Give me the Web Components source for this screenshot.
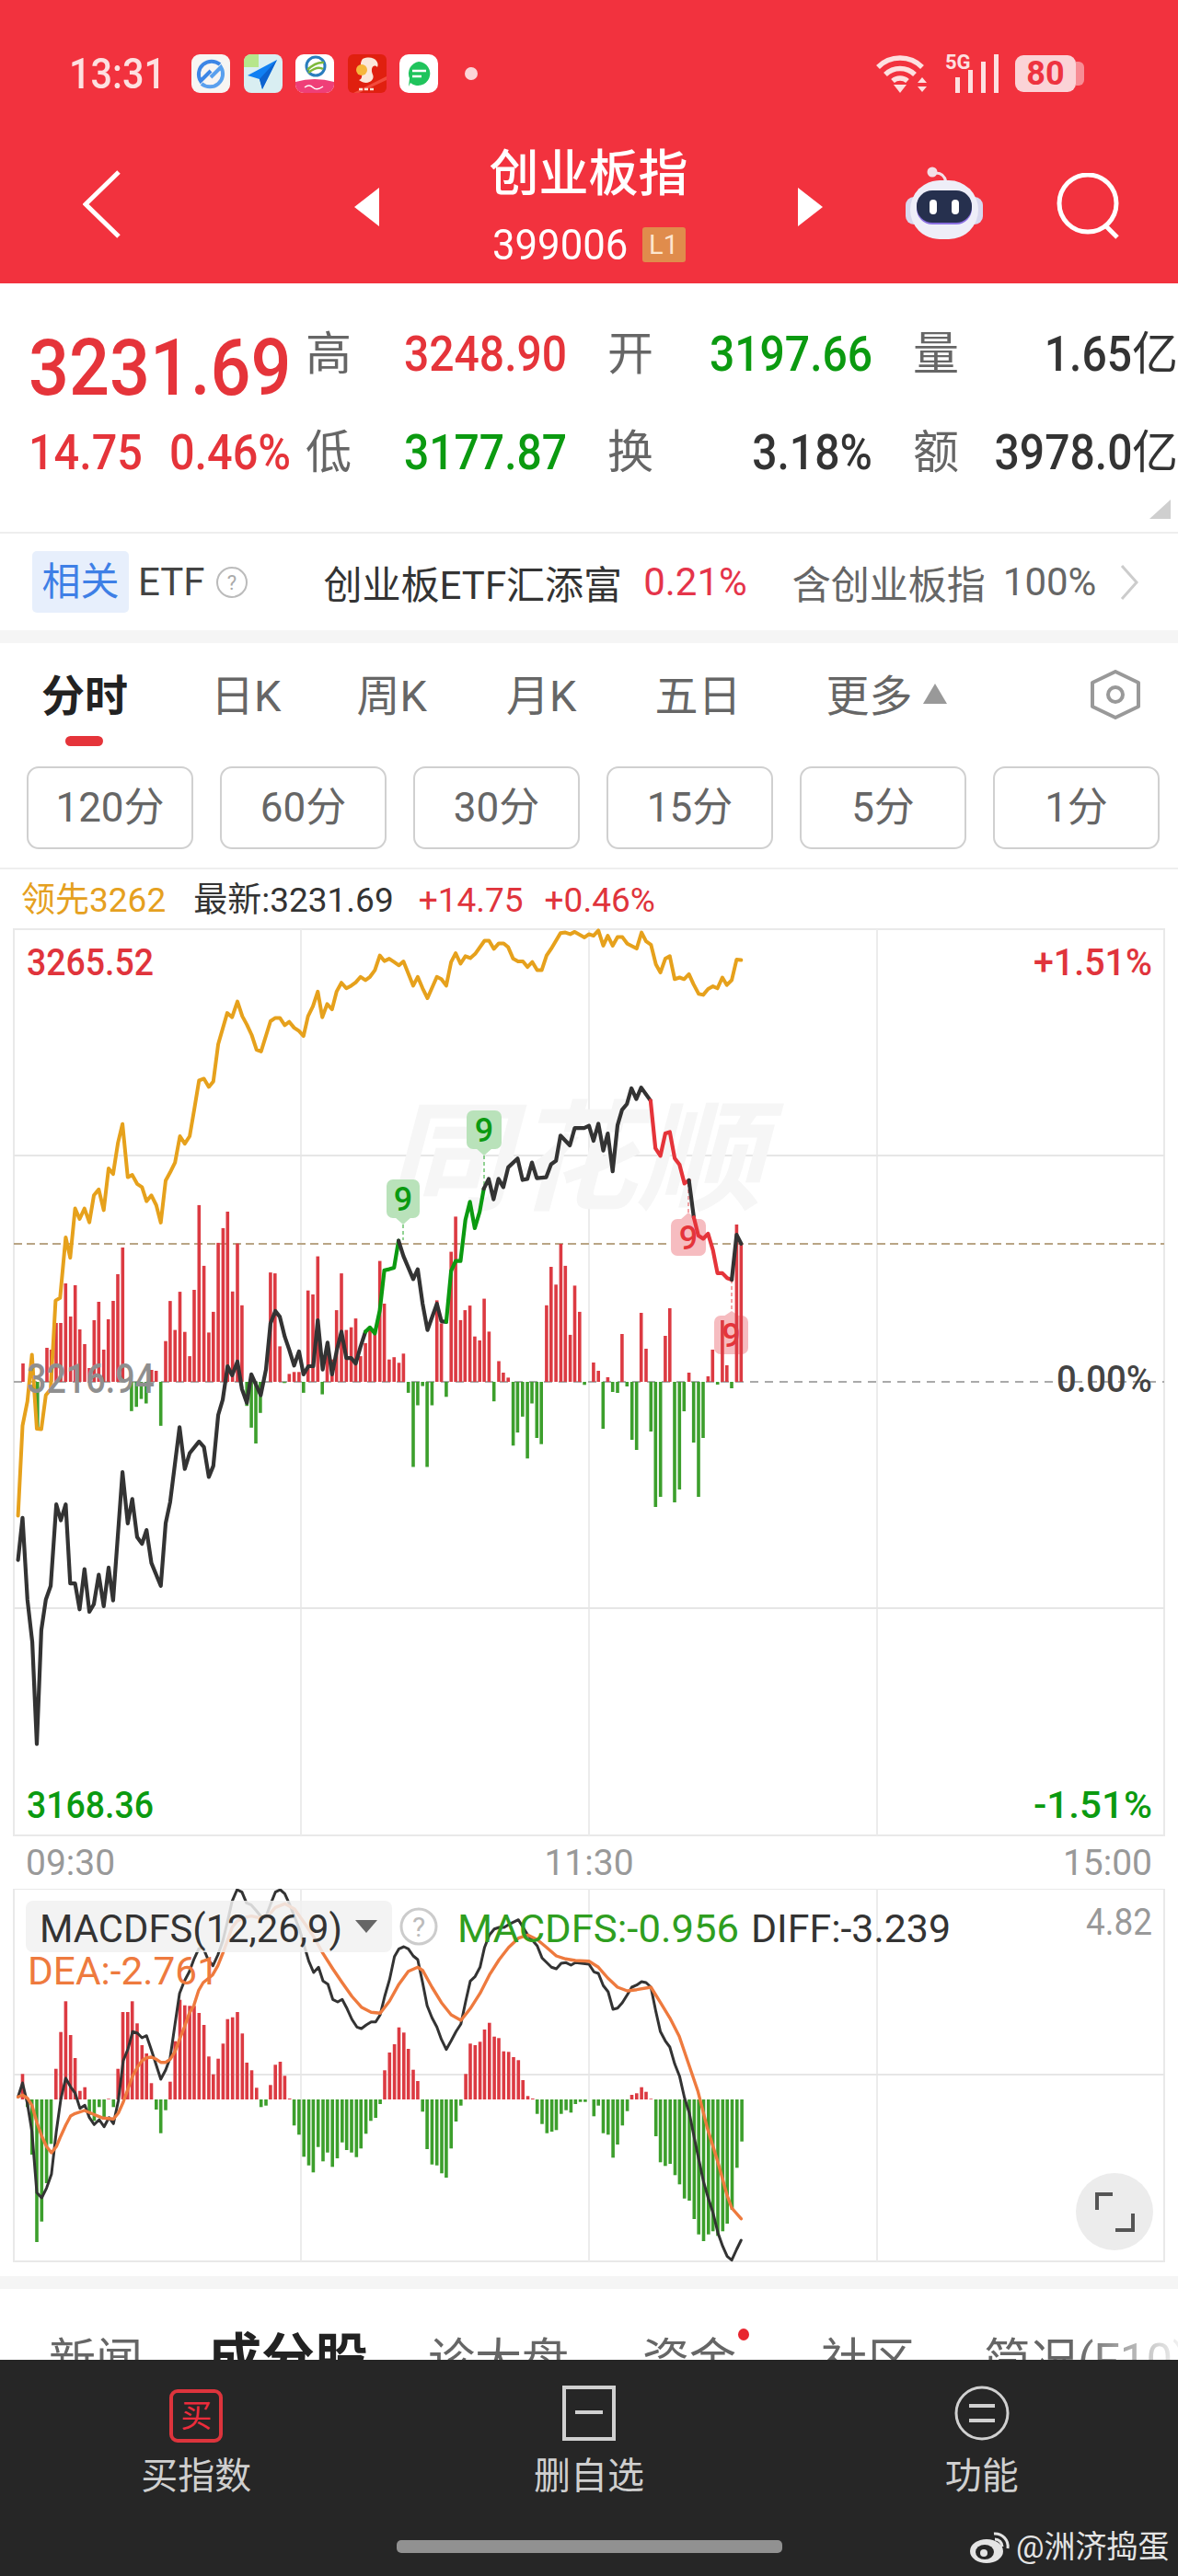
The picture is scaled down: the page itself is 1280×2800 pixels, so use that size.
<!DOCTYPE html>
<html lang="zh-CN">
<head>
<meta charset="utf-8">
<title>创业板指</title>
<style>
  html, body { margin: 0; padding: 0; background: #fff; }
  body {
    width: 1280px;
    height: 2800px;
    overflow: hidden;
    font-family: Roboto, "Noto Sans CJK SC", sans-serif;
    color: #333;
  }
</style>
</head>
<body>
<x-top-bar></x-top-bar>
<x-quote></x-quote>
<x-etf-row></x-etf-row>
<x-period-tabs></x-period-tabs>
<x-legend></x-legend>
<x-price-chart></x-price-chart>
<x-time-axis></x-time-axis>
<x-macd-chart></x-macd-chart>
<x-sub-tabs></x-sub-tabs>
<x-foot-bar></x-foot-bar>

<script>
const RED = "#e5343a";
const GREEN = "#0b9a10";
const BAR_RED = "#dc3a42";
const BAR_GREEN = "#3c9f2c";

// the chart numbers below were read from crops, so each list keeps its crop's scale
function crop(flat, x0, y0, sy) {
  const out = [];
  for (let i = 0; i < flat.length; i += 2) {
    out.push([x0 + flat[i] / 2.45, y0 + flat[i + 1] / sy]);
  }
  return out;
}
const a3 = (flat) => crop(flat, 0, 960, 2.8);
const a4 = (flat) => crop(flat, 640, 1000, 2.8);
const a5 = (flat) => crop(flat, 0, 1480, 3.015);
const m7 = (flat) => crop(flat, 0, 2040, 3);
const m6 = (flat) => crop(flat, 640, 1980, 3);

function line(points, color, width) {
  const p = points.map((q) => q[0].toFixed(1) + "," + q[1].toFixed(1)).join(" ");
  return `<polyline points="${p}" fill="none" stroke="${color}" stroke-width="${width}" stroke-linejoin="round" stroke-linecap="round"/>`;
}

function label(x, y, str, fill, size, len, anchor) {
  return `<text x="${x}" y="${y}" fill="${fill}" font-size="${size}" text-anchor="${anchor || "start"}" textLength="${len}" lengthAdjust="spacingAndGlyphs">${str}</text>`;
}

function bar(x, zero, h) {
  const color = h > 0 ? BAR_RED : BAR_GREEN;
  const top = h > 0 ? zero - h : zero;
  return `<rect x="${(x - 1.8).toFixed(1)}" y="${top.toFixed(1)}" width="3.6" height="${Math.abs(h).toFixed(1)}" fill="${color}"/>`;
}

function frame(top, bottom, rows) {
  let s = `<rect x="15" y="${top}" width="1250" height="${bottom - top}" fill="none" stroke="#e9e9e9" stroke-width="2"/>`;
  for (const x of [327, 640, 953]) {
    s += `<line x1="${x}" x2="${x}" y1="${top}" y2="${bottom}" stroke="#ececec" stroke-width="2"/>`;
  }
  for (const y of rows) {
    s += `<line x1="15" x2="1265" y1="${y}" y2="${y}" stroke="#e6e6e6" stroke-width="2"/>`;
  }
  return s;
}

class TopBar extends HTMLElement {
  constructor() {
    super();
    this.attachShadow({ mode: "open" });
    this.shadowRoot.innerHTML = `
      <style>
        :host { display: block; height: 308px; background: #f2323e; color: #fff; overflow: hidden; }
        .status { display: flex; align-items: center; height: 42px; padding: 59px 0 0 75px; color: #fde0e0; }
        .time { width: 133px; font-size: 46px; font-weight: 500; }
        .time span { display: inline-block; transform: scaleX(.9); transform-origin: left center; }
        .apps { display: flex; gap: 14.5px; }
        .apps svg { display: block; }
        .dot { width: 14px; height: 14px; border-radius: 50%; background: #fcd4d8; margin-left: 29px; }
        .right { display: flex; align-items: center; margin-left: auto; padding-right: 102px; }
        .five { position: relative; width: 75px; height: 42px; margin-left: 15px; }
        .five b { position: absolute; left: 0; top: -4px; font-size: 22px; font-weight: 700; }
        .batt { display: flex; align-items: center; margin-left: 1px; }
        .batt div { width: 66px; height: 40px; border-radius: 9px; background: #fbd3d7; color: #ee3340; font-size: 36px; font-weight: 700; line-height: 40px; text-align: center; }
        .batt i { width: 9px; height: 26px; background: #f78d95; border-radius: 0 6px 6px 0; }
        .nav { display: flex; align-items: flex-start; padding-top: 61px; }
        .nav > svg { flex: none; }
        .back { margin: 23px 0 0 90px; }
        .tri-l { margin: 42px 0 0 254px; }
        .tri-r { margin-top: 42px; }
        .center { flex: none; width: 455px; display: flex; flex-direction: column; align-items: center; }
        .title { font-size: 54px; line-height: 56px; font-weight: 500; }
        .code { display: flex; width: 210px; margin-top: 29px; align-items: center; }
        .code span { flex: none; width: 163px; font-size: 46px; line-height: 38px; transform: scaleX(.95); transform-origin: left center; }
        .code b { flex: none; width: 47px; height: 38px; background: #e08c4c; border-radius: 3px; color: #fde6cf; font-size: 29px; font-weight: 400; line-height: 38px; text-align: center; }
        .robot { margin: 19px 0 0 90px; }
        .search { margin: 26px 0 0 80px; }
      </style>
      <div class="status">
        <div class="time"><span>13:31</span></div>
        <div class="apps">
          <svg width="42" height="42" viewBox="0 0 42 42">
            <rect width="42" height="42" rx="9" fill="#f7f5f3"/>
            <path d="M31 11A14 14 0 0 0 10 29L21 18" fill="none" stroke="#3d86e6" stroke-width="4"/>
            <path d="M11 32A14 14 0 0 0 32 14L21 25" fill="none" stroke="#5aa0ee" stroke-width="4"/>
          </svg>
          <svg width="42" height="42" viewBox="0 0 42 42">
            <rect width="42" height="42" rx="8" fill="#d9eef2"/>
            <path d="M8 0H16V14H0V8A8 8 0 0 1 8 0Z" fill="#b6e68c"/>
            <path d="M36 6L4 23L17 27L20 38Z" fill="#1180f2"/>
            <path d="M36 6L17 27L20 38Z" fill="#0c62cf"/>
          </svg>
          <svg width="42" height="42" viewBox="0 0 42 42">
            <rect width="42" height="42" rx="9" fill="#fff"/>
            <path d="M0 30Q21 24 42 30V33A9 9 0 0 1 33 42H9A9 9 0 0 1 0 33Z" fill="#ef3f78"/>
            <ellipse cx="22" cy="13" rx="10" ry="10" fill="none" stroke="#2a7dbe" stroke-width="3"/>
            <path d="M13 17Q22 8 31 9M14 20Q24 12 30 16" fill="none" stroke="#7fb93c" stroke-width="2.5"/>
            <path d="M10 36Q15 32 19 36T30 35" fill="none" stroke="#fff" stroke-width="1.5"/>
          </svg>
          <svg width="42" height="42" viewBox="0 0 42 42">
            <rect width="42" height="42" rx="6" fill="#e0200f"/>
            <path d="M42 24V28L12 42H6Z" fill="#f24a3c"/>
            <path d="M16 5C27 0 35 8 32 14C28 10 24 15 27 22C30 28 21 35 12 28C20 26 10 12 16 5Z" fill="#fbe7da"/>
            <circle cx="15" cy="17" r="6" fill="#f6b73c"/>
            <path d="M12 38H30" stroke="#fbe7da" stroke-width="2.5" stroke-dasharray="4 2"/>
          </svg>
          <svg width="42" height="42" viewBox="0 0 42 42">
            <rect width="42" height="42" rx="10" fill="#fff"/>
            <path d="M21 8A13 13 0 1 1 12 31L10 35L11 26A13 13 0 0 1 21 8Z" fill="#1fc45c"/>
            <path d="M14 18H29M14 24H24" stroke="#fff" stroke-width="2.5"/>
          </svg>
        </div>
        <div class="dot"></div>
        <div class="right">
          <svg width="60" height="42" viewBox="0 0 60 42" fill="none" stroke="#fde0e0">
            <path d="M2 14A34 34 0 0 1 50 14" stroke-width="5.500"/>
            <path d="M10 22A23 23 0 0 1 42 22" stroke-width="5.500"/>
            <path d="M18 29A12 12 0 0 1 34 29" stroke-width="5.500"/>
            <path d="M19 33H33L26 42Z" fill="#fde0e0" stroke="none"/>
            <path d="M50 25L55 31H45ZM45 35H55L50 41Z" fill="#fde0e0" stroke="none"/>
          </svg>
          <div class="five">
            <b>5G</b>
            <svg width="75" height="42" viewBox="0 0 75 42" fill="#fde0e0">
              <rect x="11" y="25" width="5" height="17"/>
              <rect x="25" y="17" width="5" height="25"/>
              <rect x="39" y="8" width="5" height="34"/>
              <rect x="53" y="0" width="5" height="42"/>
            </svg>
          </div>
          <div class="batt"><div>80</div><i></i></div>
        </div>
      </div>
      <div class="nav">
        <svg class="back" width="41" height="74" viewBox="0 0 41 74" fill="none" stroke="#fff" stroke-width="5"><path d="M39 2L3 37L39 72"/></svg>
        <svg class="tri-l" width="27" height="42" viewBox="0 0 27 42" fill="#fff"><path d="M27 0V42L0 21Z"/></svg>
        <div class="center">
          <div class="title">创业板指</div>
          <div class="code"><span>399006</span><b>L1</b></div>
        </div>
        <svg class="tri-r" width="27" height="42" viewBox="0 0 27 42" fill="#fff"><path d="M0 0V42L27 21Z"/></svg>
        <svg class="robot" width="84" height="82" viewBox="0 0 84 82">
          <circle cx="29" cy="6" r="5.500" fill="#f3dfe6"/>
          <path d="M31 7Q42 6 44 17" fill="none" stroke="#f3dfe6" stroke-width="3"/>
          <rect x="0" y="33" width="84" height="30" rx="9" fill="#d8d8ee"/>
          <rect x="5" y="15" width="74" height="64" rx="32" fill="#eeeef8"/>
          <rect x="12" y="27" width="60" height="36" rx="17" fill="#8a6fe0"/>
          <rect x="12" y="26" width="60" height="35" rx="17" fill="#26304e"/>
          <rect x="26" y="36" width="8" height="16" rx="4" fill="#fff"/>
          <rect x="50" y="36" width="8" height="16" rx="4" fill="#fff"/>
        </svg>
        <svg class="search" width="72" height="72" viewBox="0 0 72 72" fill="none" stroke="#fff" stroke-width="5"><ellipse cx="34" cy="33" rx="31" ry="31"/><path d="M53 57L66 70"/></svg>
      </div>
    `;
  }
}

class Quote extends HTMLElement {
  constructor() {
    super();
    this.attachShadow({ mode: "open" });
    this.shadowRoot.innerHTML = `
      <style>
        :host { display: block; height: 272px; position: relative; box-sizing: border-box; padding: 32px 0 0 31px; border-bottom: 2px solid #eee; }
        .grid { display: grid; grid-template-columns: 304px 47px 234px 94px 238px 94px 238px; grid-auto-rows: 90px; row-gap: 17px; align-items: center; }
        .l { justify-self: end; font-size: 50px; line-height: 90px; color: #666; }
        .v { justify-self: end; display: flex; align-items: center; font-size: 54px; font-weight: 500; line-height: 90px; }
        .v span { display: inline-block; transform: scaleX(.89); transform-origin: right center; }
        .v em { font-style: normal; font-size: 50px; font-weight: 400; }
        .up { color: ${RED}; }
        .down { color: ${GREEN}; }
        .big { font-size: 86px; line-height: 90px; font-weight: 500; color: ${RED}; padding-top: 30px; }
        .big span, .pair span { display: inline-block; transform: scaleX(.9); transform-origin: left center; }
        .pair { display: flex; gap: 15px; font-size: 54px; font-weight: 500; line-height: 90px; color: ${RED}; }
        .pair span { flex: none; }
        .corner { position: absolute; right: 8px; bottom: 14px; }
      </style>
      <div class="grid">
        <div class="big"><span>3231.69</span></div>
        <div class="l">高</div><div class="v up"><span>3248.90</span></div>
        <div class="l">开</div><div class="v down"><span>3197.66</span></div>
        <div class="l">量</div><div class="v"><span>1.65</span><em>亿</em></div>
        <div class="pair"><span>14.75</span><span>0.46%</span></div>
        <div class="l">低</div><div class="v down"><span>3177.87</span></div>
        <div class="l">换</div><div class="v"><span>3.18%</span></div>
        <div class="l">额</div><div class="v"><span>3978.0</span><em>亿</em></div>
      </div>
      <svg class="corner" width="23" height="21" viewBox="0 0 23 21" fill="#cfcfcf"><path d="M23 0V21H0Z"/></svg>
    `;
  }
}

class EtfRow extends HTMLElement {
  constructor() {
    super();
    this.attachShadow({ mode: "open" });
    this.shadowRoot.innerHTML = `
      <style>
        :host { display: flex; align-items: center; height: 119px; box-sizing: border-box; padding-left: 35px; border-bottom: 14px solid #f5f5f5; font-size: 42px; white-space: nowrap; }
        .chip { width: 105px; height: 67px; line-height: 67px; text-align: center; border-radius: 5px; background: #e7effc; color: #3e7fe6; }
        .etf { margin-left: 10px; color: #444; }
        .help { margin-left: 11px; }
        .name { margin-left: 82px; color: #333; }
        .pct { margin-left: 23px; color: #e5344a; }
        .sub { margin-left: 49px; color: #666; }
        .cent { margin-left: 19px; color: #666; }
        svg { flex: none; }
        .more { margin-left: 26px; }
      </style>
      <div class="chip">相关</div>
      <span class="etf">ETF</span>
      <svg class="help" width="36" height="36" viewBox="0 0 36 36"><circle cx="18" cy="18" r="16" fill="none" stroke="#bbb" stroke-width="2"/><text x="18" y="26" text-anchor="middle" font-size="22" fill="#aaa">?</text></svg>
      <span class="name">创业板ETF汇添富</span>
      <span class="pct">0.21%</span>
      <span class="sub">含创业板指</span>
      <span class="cent">100%</span>
      <svg class="more" width="20" height="38" viewBox="0 0 20 38" fill="none" stroke="#ccc" stroke-width="3"><path d="M2 1L18 19L2 37"/></svg>
    `;
  }
}

class PeriodButton extends HTMLElement {
  constructor() {
    super();
    this.attachShadow({ mode: "open" });
    this.shadowRoot.innerHTML = `
      <style>
        :host { display: block; box-sizing: border-box; width: 181px; height: 90px; line-height: 86px; text-align: center; border: 2px solid #d0d0d0; border-radius: 13px; color: #666; font-size: 44px; }
      </style>
      <slot></slot>
    `;
  }
}

class PeriodTabs extends HTMLElement {
  constructor() {
    super();
    this.attachShadow({ mode: "open" });
    this.shadowRoot.innerHTML = `
      <style>
        :host { display: block; box-sizing: border-box; height: 246px; padding: 28px 0 0 45px; border-bottom: 2px solid #eee; }
        .tabs { display: flex; align-items: flex-start; height: 84px; font-size: 47px; line-height: 60px; color: #666; }
        .active { width: 92px; font-weight: 700; color: #222; white-space: nowrap; }
        .active i { display: block; width: 41px; height: 11px; margin: 13px auto 0 26px; border-radius: 6px; background: ${RED}; }
        .tri { margin: 16px 0 0 11px; }
        .set { margin: 1px 40px 0 auto; }
        .btns { display: flex; gap: 29px; margin: 22px 0 0 -16px; }
      </style>
      <div class="tabs">
        <div class="active">分时<i></i></div>
        <div style="margin-left:92px">日K</div>
        <div style="margin-left:82px">周K</div>
        <div style="margin-left:86px">月K</div>
        <div style="margin-left:85px">五日</div>
        <div style="margin-left:92px">更多</div>
        <svg class="tri" width="26" height="22" viewBox="0 0 26 22" fill="#999"><path d="M13 0L26 22H0Z"/></svg>
        <svg class="set" width="56" height="54" viewBox="0 0 56 54" fill="none" stroke="#999" stroke-width="4" stroke-linejoin="round"><path d="M28 2L53 14V40L28 52L3 40V14Z"/><circle cx="28" cy="27" r="8"/></svg>
      </div>
      <div class="btns">
        <x-period-btn>120分</x-period-btn>
        <x-period-btn>60分</x-period-btn>
        <x-period-btn>30分</x-period-btn>
        <x-period-btn>15分</x-period-btn>
        <x-period-btn>5分</x-period-btn>
        <x-period-btn>1分</x-period-btn>
      </div>
    `;
  }
}

class Legend extends HTMLElement {
  constructor() {
    super();
    this.attachShadow({ mode: "open" });
    this.shadowRoot.innerHTML = `
      <style>
        :host { display: flex; box-sizing: border-box; height: 55px; padding: 12px 0 0 23px; font-size: 37px; line-height: 44px; white-space: nowrap; }
        .gold { color: #e5a020; }
        .now { margin-left: 30px; color: #333; }
        .a { margin-left: 27px; color: #e0343c; }
        .b { margin-left: 23px; color: #e0343c; }
      </style>
      <span class="gold">领先3262</span>
      <span class="now">最新:3231.69</span>
      <span class="a">+14.75</span>
      <span class="b">+0.46%</span>
    `;
  }
}

const GOLD = [
  ...a5([48,505,60,210,73,130]),
  ...a3([85,1435]),
  ...a5([98,220,110,222,122,110,135,90]),
  ...a3([148,1270,160,1262,175,1078,187,1140,200,990,212,1022,225,990,238,1032,250,950,263,932,276,995,289,868,301,885,314,790,326,733,340,895,352,888,365,915,378,925,390,968,403,950,416,980,428,1033,441,905,453,880,466,850,479,770,492,793,505,770,517,690,530,600,543,595,556,620,568,603,581,490,605,395,618,408,632,360,645,405,657,430,670,462,683,507,695,512,720,420,733,410,745,410,758,432,770,422,783,440,796,450,808,465,820,405,833,375,846,330,858,408,871,368,884,384,896,330,909,303,922,320,935,312,947,302,960,285,973,295,985,285,998,265,1011,220,1023,237,1036,230,1049,240,1062,250,1074,238,1087,275,1100,312,1112,285,1125,320,1138,350,1163,285,1175,292,1188,312,1201,240,1213,213,1226,245,1239,222,1252,228,1265,215,1290,175,1302,175,1315,200,1328,183,1341,183,1353,195,1366,230,1379,238,1392,238,1404,255,1417,240,1430,265,1442,265,1455,220,1467,200,1492,152,1505,150,1518,155,1530,148,1556,165,1568,155]),
  ...a4([12,48,25,32,38,78,50,48,63,78,76,52,89,52,102,72,127,87,140,38,152,65,165,75,178,135,190,160,203,118,215,110,228,180,241,175,253,180,266,165,278,195,292,225,304,228,317,210,330,202,342,208,355,175,367,198,380,183,393,120,405,122]),
];

const PRICE_LINES = [
  ["#333", [
    ...a5([48,650,60,512,73,780,86,920,98,1253,110,880,122,780,135,735,150,468,162,520,175,468,187,727,200,727,212,812,225,680,238,820,250,795,263,698,276,802,289,675,301,783,326,362,340,530,352,450,365,575,378,597,390,552,403,660,428,735,441,530,453,460,478,215,492,352,505,300,530,262,543,280,556,378,568,342,581,175,593,125,606,15,618,45,632,0,644,90,657,135,669,42,694,110]),
    ...a3([708,1480,720,1340,733,1302,745,1320,758,1380,770,1420,783,1468,796,1425,808,1495,821,1470,834,1470,846,1330,859,1480,872,1398,884,1495,897,1420,909,1365,922,1445,935,1445,947,1462,960,1410,973,1365]),
  ]],
  [GREEN, a3([973,1365,985,1352,998,1370,1011,1300,1023,1178,1036,1175,1049,1170,1061,1088])],
  ["#333", a3([1061,1088,1074,1135,1087,1170,1100,1205,1112,1175,1125,1280,1138,1360,1163,1280,1175,1333,1188,1335])],
  [GREEN, a3([1188,1335,1201,1180,1213,1150,1226,1150,1239,1025,1251,970,1264,1050,1277,1000,1288,930])],
  ["#333", [
    ...a3([1288,930,1301,900,1314,962,1327,900,1340,925,1353,865,1378,838,1391,903,1404,900,1416,850,1429,898,1454,895,1467,855,1480,845,1492,768,1517,798,1530,745,1555,745,1568,738]),
    ...a4([12,672,25,620,38,702,50,650,63,765,76,625,88,578,101,560,113,512,126,545,139,510,164,550]),
  ]],
  [RED, a4([164,550,177,695,190,718,203,650,215,645,228,725,241,745,254,802,266,792])],
  ["#333", a4([266,792,279,905])],
  [RED, a4([279,905,291,960,304,970,317,955,330,1005,342,1075,355,1075,368,1090,380,1095])],
  ["#333", a4([380,1095,393,958,405,985])],
];

// red volume, left part: x from crop 10, height in px
const RED_A = [30,20, 108,37, 122,35, 138,64, 153,64, 169,107, 185,71, 200,105, 215,57, 231,41, 246,15, 262,67, 277,87, 293,35, 308,68, 324,88, 339,117, 355,146, 449,13, 464,12];
// red volume: x and bar top as read on crop 3
const RED_B = [441,1394,453,1272,466,1360,479,1244,492,1366,505,1440,517,1238,530,980,543,1165,556,1368,568,1305,581,1095,594,1050,606,1000,619,1243,632,1097,644,1285,720,1185,732,1188,745,1410,770,1494,783,1488,796,1488,820,1240,833,1252,846,1136,871,1430,884,1450,896,1300,909,1188,922,1360,935,1352,947,1325,960,1440,973,1400,985,1360,998,1360,1011,1150,1023,1280,1036,1450,1049,1443,1062,1460,1074,1432,1163,1270,1175,1340,1201,1122,1213,1015,1226,1330,1238,1300,1251,1286,1264,1380,1277,1392,1289,1265,1302,1365,1328,1455,1340,1490,1353,1505,1455,1285,1467,1168,1480,1222,1493,1098,1505,1165,1518,1375,1530,1225,1543,1305];
// green volume: x and bar bottom as read on crop 5
const GREEN_A = [100,220,350,162,363,148,376,122,389,137,428,210,657,145,669,216,681,268,693,168,757,70,808,102,858,107,1087,102,1100,345,1112,143,1125,80,1137,345,1150,143,1188,115,1315,130,1366,275,1378,232,1391,180,1404,317,1416,137,1429,250,1441,270,1556,76];
// right part, crop 4 and crop 9: [x on crop, height]
const RED_C = [12,21,25,12,50,5,88,52,139,75,152,36,203,50,215,80,266,10,317,6,329,35,355,67,367,18,393,171,405,150];
const GREEN_C = [46,51,77,11,93,12,124,5,140,63,155,74,202,54,217,136,233,125,279,131,295,117,310,32,341,66,357,125,372,61,419,3,465,7];

// MACD histogram, crop 7: x, end of bar; crop 6 after that
const MACD_A = [60,642,73,750,85,905,98,1190,111,1123,124,998,136,870,149,625,162,505,175,405,188,515,200,590,213,697,226,685,238,775,251,795,264,750,277,790,289,723,302,750,314,625,327,440,340,440,352,405,365,477,378,548,390,575,403,672,416,758,428,835,441,760,453,667,466,535,479,400,492,418,505,420,517,420,530,443,543,482,556,585,568,643,581,592,594,543,606,463,619,457,632,440,645,510,657,605,670,630,683,687,695,750,708,745,720,678,733,612,746,602,758,648,771,722,783,810,796,840,809,912,822,940,834,963,847,880,860,927,872,898,885,945,898,917,911,865,923,890,936,898,949,913,961,885,974,837,987,795,1000,785,1012,740,1024,630,1037,572,1050,545,1062,490,1075,507,1087,560,1100,628,1112,665,1125,765,1137,887,1150,937,1163,940,1176,966,1188,980,1201,885,1214,797,1227,745,1240,642,1252,543,1265,548,1278,537,1290,497,1303,475,1316,520,1328,525,1341,568,1354,570,1367,587,1380,597,1392,662,1405,714,1418,722,1430,772,1443,805,1456,835,1469,830,1481,825,1494,772,1507,760,1520,768,1532,740,1545,733,1558,733];
const MACD_B = [13,960,25,925,38,1015,51,1020,64,1095,76,1052,89,990,102,943,114,890,127,885,140,865,152,880,165,903,178,1025,190,1110,203,1122,216,1115,229,1152,241,1182,254,1228,267,1235,280,1295,292,1345,305,1367,318,1345,330,1335,343,1350,356,1335,368,1310,381,1265,394,1128,407,1042];

const DIFF = [
  ...m7([48,718,60,672,73,740,85,830,98,1030,111,1047,124,1015,137,970,150,830,162,725,175,657,188,685,200,705,213,755,226,745,238,785,251,808,264,792,277,815,290,785,302,805,315,730,328,600,341,560,353,505,366,510,378,525,390,518,403,565,428,660,441,630,453,590,466,480,478,380,491,340,504,310,516,270,529,235,541,232,554,270,567,290,580,255,593,210,605,150,618,80,631,42,644,50,656,85,669,92,682,110,695,130,708,130,720,90,733,50,746,42,758,55,771,90,784,130,797,170,810,225,822,275,835,312,848,295,860,340,873,350,886,400,899,408,911,400,924,430,937,465,950,490,962,495,975,483,988,473,1000,473,1012,450,1024,390,1037,335,1050,260,1062,235,1075,228,1087,235,1100,258,1112,270,1125,345,1137,420,1150,460,1163,490,1175,530,1188,563,1201,535,1214,505,1227,480,1240,405,1252,340,1265,325,1278,295,1290,230,1303,190,1316,170,1329,165,1342,165,1355,155,1380,140,1405,190,1430,225,1443,265,1468,295,1481,300,1494,282,1507,280,1520,288,1532,280,1568,285]),
  ...m6([13,490,25,495,38,535,51,555,64,612,76,608,89,590,102,565,114,540,127,533,140,522,152,525,165,540,178,620,190,685,203,715,215,735,228,790,241,830,254,900,267,950,280,1030,292,1100,305,1175,318,1230,330,1275,343,1340,356,1385,368,1418,380,1430,393,1395,405,1365]),
];
const DEA = [
  ...m7([48,718,60,712,73,722,85,745,98,800,111,845,124,880,137,900,150,880,162,845,175,810,188,780,200,772,225,762,250,775,275,787,302,790,315,770,328,735,341,690,353,650,366,620,378,600,390,590,403,588,416,595,428,605,441,605,453,595,466,570,478,530,491,490,504,445,516,420,529,370,541,345,566,320,580,290,593,250,605,210,618,165,631,145,644,135,669,128,695,135,708,135,733,100,758,88,784,105,810,150,835,195,860,250,886,300,911,345,937,390,962,425,988,442,1012,445,1037,405,1062,350,1087,308,1112,295,1125,305,1150,360,1175,410,1201,450,1227,468,1252,430,1278,380,1303,320,1329,270,1354,230,1380,200,1405,190,1430,205,1455,230,1481,258,1506,268,1532,273,1568,275]),
  ...m6([25,475,50,510,76,540,102,552,127,548,165,540,190,590,215,640,240,700,265,790,290,880,315,1000,343,1110,368,1220,380,1260,405,1295]),
];

function marker(left, top, right, bottom, tipX, tipY, fromY, toY, bg, fg) {
  const cx = (left + right) / 2;
  const tip = tipY > bottom
    ? `M${tipX - 9} ${bottom - 1}L${tipX} ${tipY}L${tipX + 9} ${bottom - 1}Z`
    : `M${tipX - 9} ${top + 1}L${tipX} ${tipY}L${tipX + 9} ${top + 1}Z`;
  return `
    <line x1="${tipX}" x2="${tipX}" y1="${fromY}" y2="${toY}" stroke="${fg}" stroke-width="1.500" stroke-dasharray="4 3" opacity=".6"/>
    <rect x="${left}" y="${top}" width="${right - left}" height="${bottom - top}" rx="7" fill="${bg}"/>
    <path d="${tip}" fill="${bg}"/>
    <text x="${cx}" y="${(top + bottom) / 2 + 13}" text-anchor="middle" font-size="36" fill="${fg}">9</text>`;
}

class PriceChart extends HTMLElement {
  constructor() {
    super();
    this.attachShadow({ mode: "open" });
    let bars = "";
    for (let i = 0; i < RED_A.length; i += 2) bars += bar(15 + RED_A[i] / 3, 1502, RED_A[i + 1]);
    for (let i = 0; i < RED_B.length; i += 2) bars += bar(RED_B[i] / 2.45, 1502, (1518 - RED_B[i + 1]) / 2.8);
    for (let i = 0; i < GREEN_A.length; i += 2) bars += bar(GREEN_A[i] / 2.45, 1502, -(GREEN_A[i + 1] - 66) / 3.015);
    for (let i = 0; i < RED_C.length; i += 2) bars += bar(640 + RED_C[i] / 2.45, 1502, RED_C[i + 1]);
    for (let i = 0; i < GREEN_C.length; i += 2) bars += bar(640 + GREEN_C[i] / 3, 1502, -GREEN_C[i + 1]);
    const lines = PRICE_LINES.map((l) => line(l[1], l[0], 4.2)).join("");
    this.shadowRoot.innerHTML = `
      <style>
        :host { display: block; height: 1000px; }
        svg { display: block; font-family: Roboto, "Noto Sans CJK SC", sans-serif; font-weight: 500; }
      </style>
      <svg width="1280" height="1000" viewBox="0 1000 1280 1000">
        ${frame(1010, 1995, [1256, 1748])}
        <text x="418" y="1305" font-size="130" font-weight="700" font-style="italic" fill="#f6f6f6" textLength="411" lengthAdjust="spacingAndGlyphs">同花顺</text>
        <line x1="15" x2="1265" y1="1352" y2="1352" stroke="#b9a585" stroke-width="2" stroke-dasharray="9 5"/>
        <line x1="15" x2="1265" y1="1502" y2="1502" stroke="#aaa" stroke-width="2" stroke-dasharray="9 7"/>
        ${marker(420, 1282, 456, 1324, 438, 1331, 1331, 1348, "#b9e2ba", GREEN)}
        ${marker(507, 1207, 545, 1249, 526, 1256, 1256, 1290, "#b9e2ba", GREEN)}
        ${marker(729, 1325, 767, 1365, 748, 1318, 1286, 1318, "#f6bcc0", RED)}
        ${marker(776, 1430, 813, 1472, 795, 1425, 1391, 1425, "#f6bcc0", RED)}
        ${bars}
        ${line(GOLD, "#e6a11c", 4)}
        ${lines}
        ${label(29, 1060, "3265.52", "#e0343c", 40, 138)}
        ${label(1252, 1060, "+1.51%", "#e0343c", 40, 129, "end")}
        ${label(29, 1514, "3216.94", "#8f8f8f", 44, 139)}
        ${label(1252, 1513, "0.00%", "#444", 40, 104, "end")}
        ${label(29, 1976, "3168.36", GREEN, 40, 138)}
        ${label(1252, 1976, "-1.51%", GREEN, 40, 129, "end")}
      </svg>
    `;
  }
}

class TimeAxis extends HTMLElement {
  constructor() {
    super();
    this.attachShadow({ mode: "open" });
    this.shadowRoot.innerHTML = `
      <style>
        :host { display: flex; justify-content: space-between; box-sizing: border-box; height: 53px; padding: 2px 28px 0; font-size: 39px; line-height: 46px; color: #999; }
      </style>
      <span>09:30</span><span>11:30</span><span>15:00</span>
    `;
  }
}

class MacdChart extends HTMLElement {
  constructor() {
    super();
    this.attachShadow({ mode: "open" });
    let bars = "";
    for (let i = 0; i < MACD_A.length; i += 2) bars += bar(MACD_A[i] / 2.45, 2282, (725 - MACD_A[i + 1]) / 3);
    for (let i = 0; i < MACD_B.length; i += 2) bars += bar(640 + MACD_B[i] / 2.45, 2282, (905 - MACD_B[i + 1]) / 3);
    this.shadowRoot.innerHTML = `
      <style>
        :host { display: block; height: 421px; }
        svg { display: block; font-family: Roboto, "Noto Sans CJK SC", sans-serif; }
      </style>
      <svg width="1280" height="421" viewBox="0 2053 1280 421">
        ${frame(2053, 2458, [2255])}
        ${bars}
        ${line(DIFF, "#333", 3)}
        ${line(DEA, "#ee7a3e", 3.4)}
        <rect x="28" y="2066" width="398" height="56" rx="8" fill="#f1f1f1" opacity=".85"/>
        ${label(43, 2111, "MACDFS(12,26,9)", "#333", 42, 329)}
        <path d="M386 2087H410L398 2101Z" fill="#666"/>
        <circle cx="455" cy="2094" r="19" fill="none" stroke="#ccc" stroke-width="3"/>
        <text x="455" y="2105" text-anchor="middle" font-size="30" fill="#bbb">?</text>
        ${label(497, 2111, "MACDFS:-0.956", "#2f9e20", 42, 306)}
        ${label(816, 2111, "DIFF:-3.239", "#333", 42, 217)}
        ${label(30, 2157, "DEA:-2.761", "#ee7a3e", 42, 208)}
        ${label(1252, 2103, "4.82", "#999", 40, 72, "end")}
        <circle cx="1211" cy="2404" r="42" fill="#ececec"/>
        <path d="M1192 2402V2385H1209M1212 2424H1231V2406" fill="none" stroke="#555" stroke-width="4"/>
      </svg>
    `;
  }
}

class SubTabs extends HTMLElement {
  constructor() {
    super();
    this.attachShadow({ mode: "open" });
    this.shadowRoot.innerHTML = `
      <style>
        :host { display: flex; align-items: baseline; box-sizing: border-box; height: 91px; padding: 46px 0 0 53px; border-top: 14px solid #f5f5f5; overflow: hidden; font-size: 51px; line-height: 60px; color: #666; white-space: nowrap; }
        .on { margin-left: 71px; font-size: 58px; font-weight: 700; color: #222; }
        .fund { position: relative; margin-left: 80px; }
        .fund i { position: absolute; right: -14px; top: -6px; width: 12px; height: 13px; border-radius: 50%; background: #e8252f; }
        .fade { margin-left: 75px; -webkit-mask-image: linear-gradient(90deg, #000 45%, transparent); mask-image: linear-gradient(90deg, #000 45%, transparent); }
      </style>
      <span>新闻</span>
      <span class="on">成分股</span>
      <span style="margin-left:65px">诊大盘</span>
      <span class="fund">资金<i></i></span>
      <span style="margin-left:92px">社区</span>
      <span class="fade">简况(F10)</span>
    `;
  }
}

class FootItem extends HTMLElement {
  constructor() {
    super();
    this.attachShadow({ mode: "open" });
    this.shadowRoot.innerHTML = `
      <style>
        :host { display: flex; flex-direction: column; align-items: center; font-size: 40px; line-height: 50px; color: #cfcfcf; }
        .icon { height: 62px; margin-bottom: 12px; }
      </style>
      <div class="icon"><slot name="icon"></slot></div>
      <slot></slot>
    `;
  }
}

class FootBar extends HTMLElement {
  constructor() {
    super();
    this.attachShadow({ mode: "open" });
    this.shadowRoot.innerHTML = `
      <style>
        :host { display: block; position: relative; height: 235px; box-sizing: border-box; padding-top: 28px; background: #262626; }
        .items { display: grid; grid-template-columns: repeat(3, 1fr); }
        .buy { position: relative; display: block; box-sizing: border-box; width: 58px; height: 58px; margin-top: 4px; border: 4px solid #dd343c; border-radius: 9px; }
        .buy b { display: block; font-weight: 400; font-size: 34px; line-height: 50px; text-align: center; color: #ec2c3c; }
        .bar { width: 419px; height: 14px; margin: 44px auto 0; border-radius: 5px; background: #919191; }
        .mark { position: absolute; left: 1053px; top: 183px; display: flex; align-items: center; font-size: 34px; line-height: 40px; color: #e4e4e4; white-space: nowrap; }
        .mark svg { margin-right: 5px; }
      </style>
      <div class="items">
        <x-foot-item><span slot="icon" class="buy"><b>买</b></span>买指数</x-foot-item>
        <x-foot-item>
          <svg slot="icon" width="58" height="60" viewBox="0 0 58 60" fill="none" stroke="#d0d0d0"><rect x="2" y="2" width="54" height="56" stroke-width="4"/><path d="M14 29H44" stroke-width="4"/></svg>
          删自选
        </x-foot-item>
        <x-foot-item>
          <svg slot="icon" width="60" height="60" viewBox="0 0 60 60" fill="none" stroke="#d0d0d0"><circle cx="30" cy="30" r="28" stroke-width="3"/><path d="M16 22H44M16 38H44" stroke-width="4"/></svg>
          功能
        </x-foot-item>
      </div>
      <div class="bar"></div>
      <div class="mark">
        <svg width="46" height="38" viewBox="0 0 46 38">
          <ellipse cx="19" cy="24" rx="18" ry="13" fill="#e4e4e4"/>
          <ellipse cx="17" cy="25" rx="10" ry="8" fill="#262626"/>
          <circle cx="16" cy="26" r="4" fill="#e4e4e4"/>
          <path d="M27 5A14 14 0 0 1 42 21M28 11A8 8 0 0 1 36 19" fill="none" stroke="#e4e4e4" stroke-width="3"/>
        </svg>
        <span>@洲济捣蛋</span>
      </div>
    `;
  }
}

customElements.define("x-top-bar", TopBar);
customElements.define("x-quote", Quote);
customElements.define("x-etf-row", EtfRow);
customElements.define("x-period-btn", PeriodButton);
customElements.define("x-period-tabs", PeriodTabs);
customElements.define("x-legend", Legend);
customElements.define("x-price-chart", PriceChart);
customElements.define("x-time-axis", TimeAxis);
customElements.define("x-macd-chart", MacdChart);
customElements.define("x-sub-tabs", SubTabs);
customElements.define("x-foot-item", FootItem);
customElements.define("x-foot-bar", FootBar);
</script>
</body>
</html>
